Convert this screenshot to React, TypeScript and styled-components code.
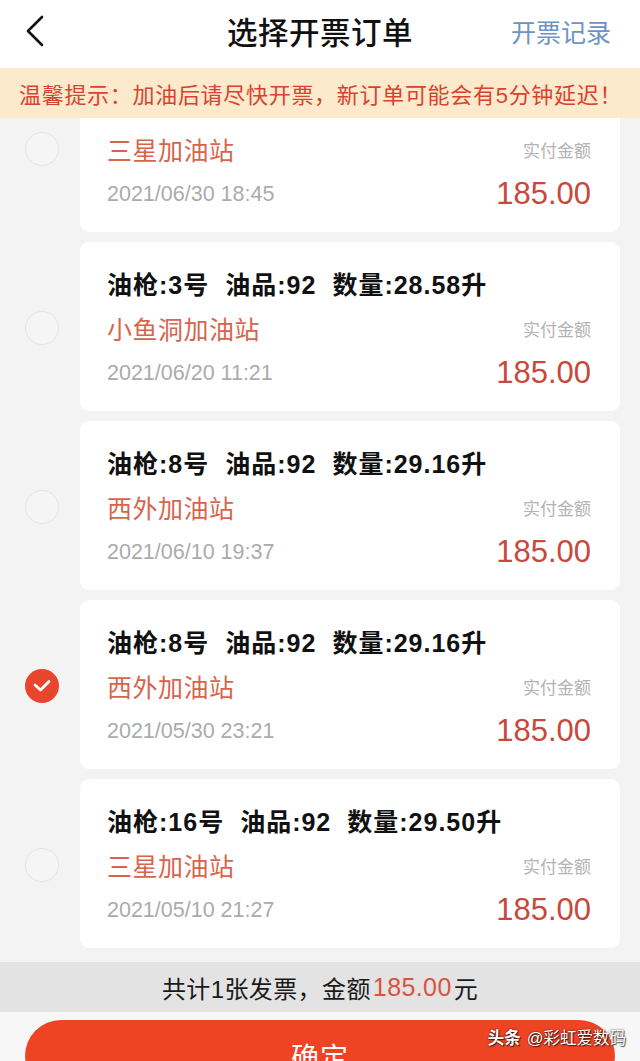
import React from "react";
import styled, { createGlobalStyle } from "styled-components";

const GlobalStyle = createGlobalStyle`
  html, body { margin: 0; padding: 0; background: #f7f7f7; overflow: hidden; }
  body { font-family: "Liberation Sans", "Noto Sans CJK SC", sans-serif; }
  * { box-sizing: border-box; }
`;

const Page = styled.div`
  width: 640px;
  display: flex;
  flex-direction: column;
`;

const Header = styled.header`
  height: 68px;
  background: #ffffff;
  display: grid;
  grid-template-columns: 130px 1fr 130px;
  align-items: center;
  padding-bottom: 6px;
`;

const BackButton = styled.div`
  padding-left: 24px;
  display: flex;
  align-items: center;
`;

const Title = styled.h1`
  margin: 0;
  text-align: center;
  font-size: 30.5px;
  font-weight: 500;
  color: #111;
  letter-spacing: 0.5px;
`;

const HeaderLink = styled.div`
  text-align: right;
  padding-right: 29px;
  font-size: 25px;
  color: #6c93c6;
`;

const Tip = styled.div`
  height: 50px;
  background: #fde9cb;
  color: #d8432f;
  font-size: 22px;
  display: flex;
  align-items: center;
  padding-left: 19px;
  white-space: nowrap;
  letter-spacing: 0.7px;
`;

const ListArea = styled.div`
  height: 844px;
  overflow: hidden;
  background: #f3f3f3;
`;

const List = styled.div`
  display: flex;
  flex-direction: column;
  gap: 10px;
`;

const Row = styled.div<{ $partial?: boolean }>`
  display: flex;
  align-items: flex-start;
  padding: 0 20px 0 25px;
  gap: 21px;
`;

const Radio = styled.div<{ $checked: boolean; $partial?: boolean }>`
  flex: none;
  width: 34px;
  height: 34px;
  margin-top: ${(p) => (p.$partial ? "14px" : "69px")};
  border-radius: 50%;
  border: ${(p) => (p.$checked ? "none" : "1.5px solid #e4e4e4")};
  background: ${(p) => (p.$checked ? "#e9452d" : "#f5f5f5")};
  display: flex;
  align-items: center;
  justify-content: center;
`;

const Card = styled.div<{ $partial?: boolean }>`
  flex: 1;
  height: ${(p) => (p.$partial ? "114px" : "169px")};
  background: #ffffff;
  border-radius: ${(p) => (p.$partial ? "0 0 9px 9px" : "9px")};
  padding: ${(p) => (p.$partial ? "14px" : "24px")} 29px 21px 27px;
  display: flex;
  flex-direction: column;
  gap: 11px;
`;

const Spec = styled.div`
  height: 34px;
  display: flex;
  align-items: center;
  gap: 16px;
  font-size: 25px;
  font-weight: 700;
  color: #111;
  letter-spacing: 1px;
  white-space: nowrap;
`;

const InfoRow = styled.div`
  height: 34px;
  display: flex;
  align-items: center;
  justify-content: space-between;
  white-space: nowrap;
`;

const Station = styled.div`
  font-size: 25px;
  color: #d6654c;
  letter-spacing: 0.5px;
`;

const PaidLabel = styled.div`
  font-size: 17px;
  color: #b3b3b3;
`;

const DateText = styled.div`
  font-size: 21.5px;
  color: #ababab;
`;

const Amount = styled.div`
  font-size: 31px;
  color: #c9483b;
`;

const SummaryBar = styled.div`
  height: 50px;
  background: #e3e3e3;
  display: flex;
  align-items: center;
  justify-content: center;
  font-size: 24px;
  color: #1a1a1a;
  letter-spacing: 0.4px;
  white-space: nowrap;
`;

const SummaryAmount = styled.span`
  color: #d9533f;
  font-size: 25px;
  margin: 0 2px;
`;

const Footer = styled.div`
  position: relative;
  padding: 8px 25px 0 25px;
  background: #f7f7f7;
`;

const ConfirmButton = styled.div`
  height: 72px;
  border-radius: 36px;
  background: #ee4424;
  color: #ffffff;
  font-size: 28px;
  display: flex;
  align-items: center;
  justify-content: center;
  letter-spacing: 1px;
`;

const Watermark = styled.div`
  position: absolute;
  right: 14px;
  top: 13px;
  font-size: 16.5px;
  color: #ffffff;
  text-shadow: 0 0 2px rgba(0, 0, 0, 0.8), 1px 1px 1px rgba(0, 0, 0, 0.6);
  white-space: nowrap;
`;

const WatermarkBrand = styled.span`
  font-weight: 700;
  margin-right: 6px;
`;

type Order = {
  spec?: [string, string, string];
  station: string;
  date: string;
  checked: boolean;
};

const orders: Order[] = [
  { station: "三星加油站", date: "2021/06/30 18:45", checked: false },
  { spec: ["油枪:3号", "油品:92", "数量:28.58升"], station: "小鱼洞加油站", date: "2021/06/20 11:21", checked: false },
  { spec: ["油枪:8号", "油品:92", "数量:29.16升"], station: "西外加油站", date: "2021/06/10 19:37", checked: false },
  { spec: ["油枪:8号", "油品:92", "数量:29.16升"], station: "西外加油站", date: "2021/05/30 23:21", checked: true },
  { spec: ["油枪:16号", "油品:92", "数量:29.50升"], station: "三星加油站", date: "2021/05/10 21:27", checked: false },
];

const Chevron = () => (
  <svg width="22" height="34" viewBox="0 0 22 34" fill="none">
    <polyline points="18,3 4,17 18,31" stroke="#111" strokeWidth="2.6" strokeLinecap="round" strokeLinejoin="round" />
  </svg>
);

const Check = () => (
  <svg width="18" height="14" viewBox="0 0 18 14" fill="none">
    <polyline points="2,6 7.5,11 16,2.5" stroke="#fff" strokeWidth="2.8" strokeLinecap="round" strokeLinejoin="round" />
  </svg>
);

export default function App() {
  return (
    <Page>
      <GlobalStyle />
      <Header>
        <BackButton>
          <Chevron />
        </BackButton>
        <Title>选择开票订单</Title>
        <HeaderLink>开票记录</HeaderLink>
      </Header>
      <Tip>温馨提示：加油后请尽快开票，新订单可能会有5分钟延迟！</Tip>
      <ListArea>
        <List>
          {orders.map((o, i) => {
            const partial = !o.spec;
            return (
              <Row key={i}>
                <Radio $checked={o.checked} $partial={partial}>
                  {o.checked && <Check />}
                </Radio>
                <Card $partial={partial}>
                  {o.spec && (
                    <Spec>
                      <span>{o.spec[0]}</span>
                      <span>{o.spec[1]}</span>
                      <span>{o.spec[2]}</span>
                    </Spec>
                  )}
                  <InfoRow>
                    <Station>{o.station}</Station>
                    <PaidLabel>实付金额</PaidLabel>
                  </InfoRow>
                  <InfoRow>
                    <DateText>{o.date}</DateText>
                    <Amount>185.00</Amount>
                  </InfoRow>
                </Card>
              </Row>
            );
          })}
        </List>
      </ListArea>
      <SummaryBar>
        共计1张发票，金额<SummaryAmount>185.00</SummaryAmount>元
      </SummaryBar>
      <Footer>
        <ConfirmButton>确定</ConfirmButton>
        <Watermark>
          <WatermarkBrand>头条</WatermarkBrand>@彩虹爱数码
        </Watermark>
      </Footer>
    </Page>
  );
}
